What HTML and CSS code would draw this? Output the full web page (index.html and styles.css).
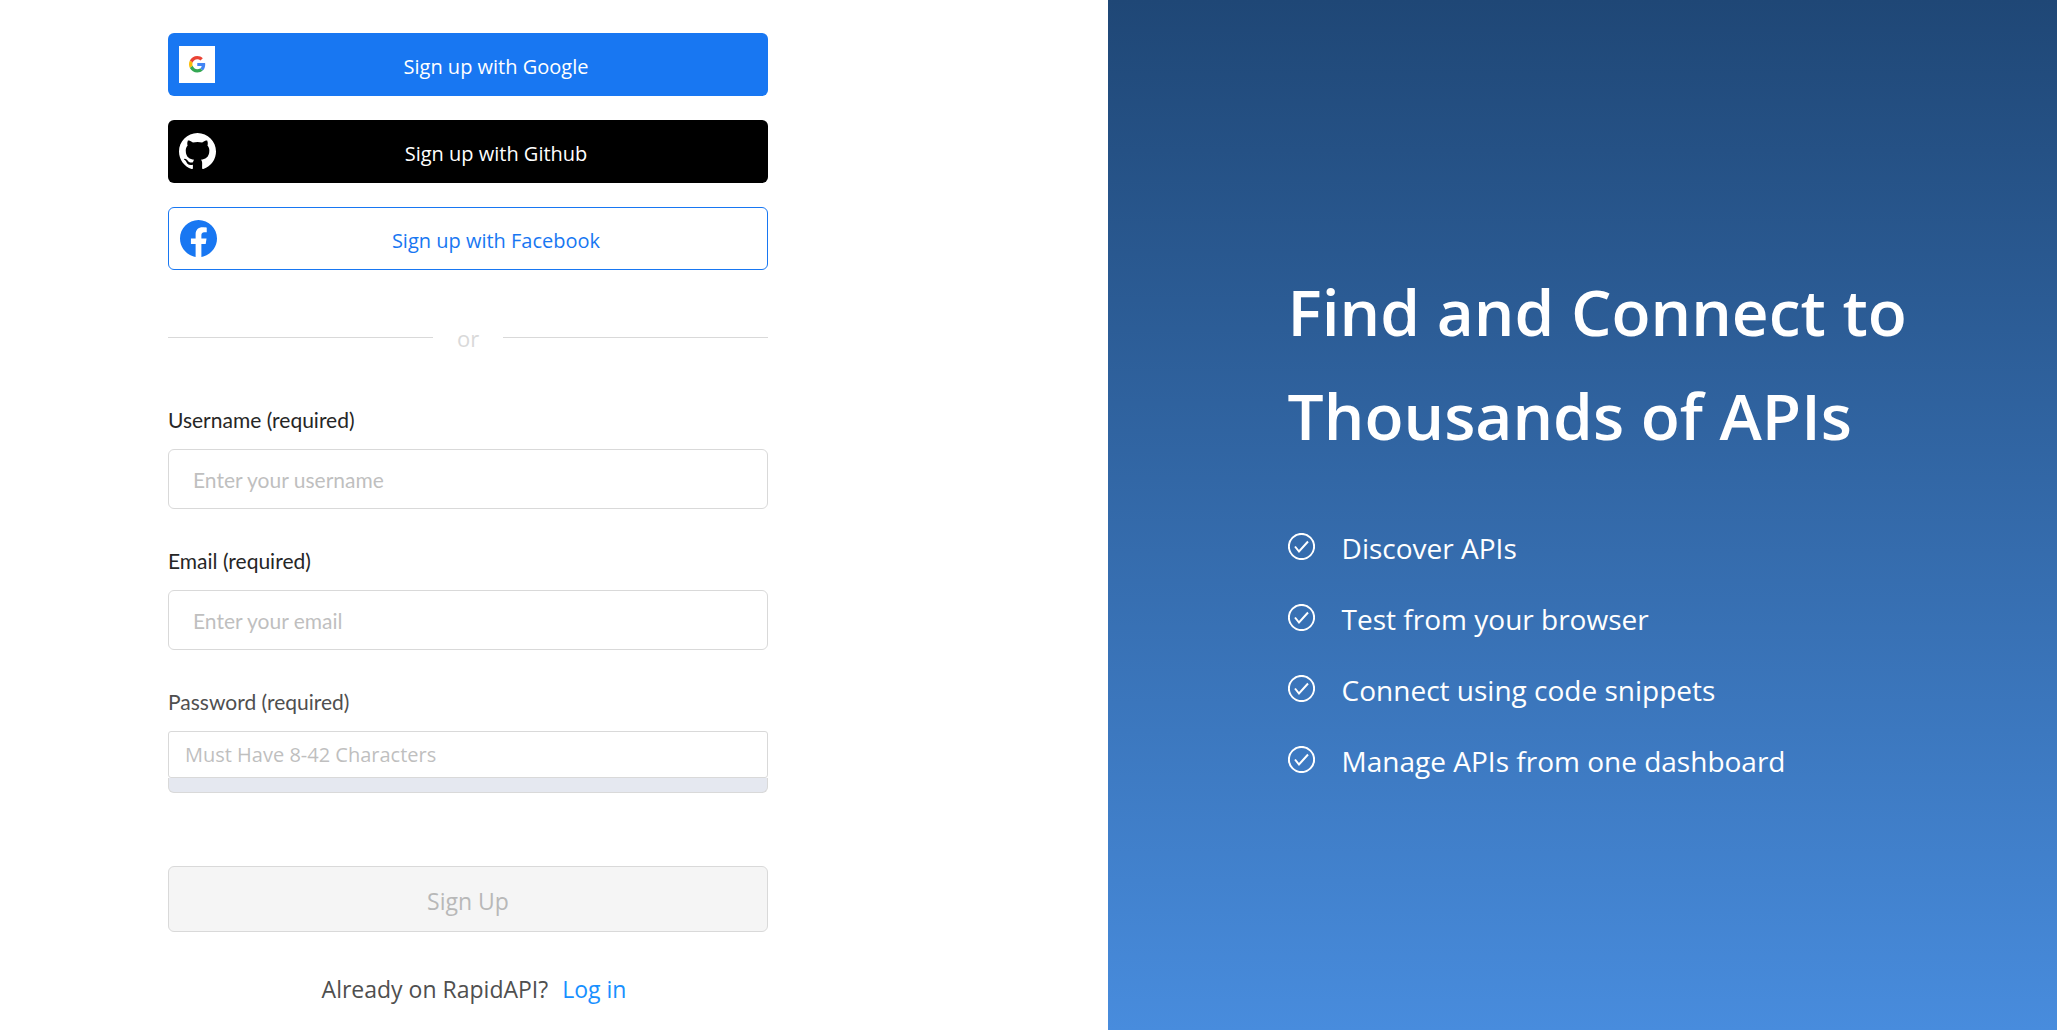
FILE: index.html
```html
<!DOCTYPE html>
<html lang="en">
<head>
<meta charset="utf-8">
<meta name="viewport" content="width=device-width, initial-scale=1">
<title>Sign up - RapidAPI</title>
<link rel="stylesheet" href="styles.css">
</head>
<body>
<div class="page">
  <main class="signup">
    <div class="signup-inner">
      <div class="providers">
        <button type="button" class="provider provider-google">
          <svg class="provider-icon" viewBox="0 0 37 37" aria-hidden="true">
            <rect width="36" height="37" fill="#fff"/>
            <g transform="translate(10 10) scale(.345)">
              <path fill="#EA4335" d="M24 9.500c3.540 0 6.710 1.220 9.210 3.600l6.850-6.850C35.900 2.380 30.470 0 24 0 14.620 0 6.510 5.380 2.560 13.220l7.980 6.190C12.430 13.720 17.740 9.500 24 9.500z"/>
              <path fill="#4285F4" d="M46.980 24.550c0-1.570-.15-3.090-.38-4.550H24v9.020h12.940c-.58 2.960-2.260 5.480-4.780 7.180l7.730 6c4.510-4.180 7.090-10.360 7.090-17.650z"/>
              <path fill="#FBBC05" d="M10.530 28.590c-.48-1.450-.76-2.990-.76-4.590s.27-3.140.76-4.590l-7.980-6.190C.92 16.460 0 20.120 0 24c0 3.880.92 7.540 2.560 10.780l7.970-6.190z"/>
              <path fill="#34A853" d="M24 48c6.480 0 11.930-2.130 15.890-5.810l-7.730-6c-2.150 1.450-4.920 2.300-8.160 2.300-6.260 0-11.570-4.220-13.470-9.910l-7.980 6.190C6.510 42.620 14.620 48 24 48z"/>
            </g>
          </svg>
          <span class="provider-text">Sign up with Google</span>
        </button>
        <button type="button" class="provider provider-github">
          <svg class="provider-icon" viewBox="0 0 16 16" aria-hidden="true">
            <path fill="#fff" d="M8 0C3.580 0 0 3.580 0 8c0 3.540 2.290 6.530 5.470 7.590.4.070.55-.17.55-.38 0-.19-.01-.82-.01-1.490-2.010.37-2.530-.49-2.690-.94-.09-.23-.48-.94-.82-1.130-.28-.15-.68-.52-.01-.53.63-.01 1.080.58 1.230.82.72 1.210 1.870.87 2.330.66.070-.52.28-.87.51-1.070-1.780-.2-3.640-.89-3.640-3.950 0-.87.31-1.590.82-2.150-.08-.2-.36-1.020.08-2.120 0 0 .67-.21 2.200.82.64-.18 1.320-.27 2-.27s1.360.09 2 .27c1.530-1.040 2.200-.82 2.200-.82.44 1.100.16 1.920.08 2.120.51.56.82 1.270.82 2.150 0 3.070-1.870 3.750-3.650 3.950.29.25.54.73.54 1.480 0 1.070-.01 1.930-.01 2.200 0 .21.15.46.55.38A8.010 8.010 0 0 0 16 8c0-4.420-3.580-8-8-8z"/>
          </svg>
          <span class="provider-text">Sign up with Github</span>
        </button>
        <button type="button" class="provider provider-facebook">
          <svg class="provider-icon" viewBox="0 0 24 24" aria-hidden="true">
            <path fill="currentColor" d="M24 12.073c0-6.627-5.373-12-12-12s-12 5.373-12 12c0 5.990 4.388 10.954 10.125 11.854v-8.385H7.078v-3.470h3.047V9.430c0-3.007 1.792-4.669 4.533-4.669 1.312 0 2.686.235 2.686.235v2.953H15.830c-1.491 0-1.956.925-1.956 1.874v2.250h3.328l-.532 3.470h-2.796v8.385C19.612 23.027 24 18.062 24 12.073z"/>
          </svg>
          <span class="provider-text">Sign up with Facebook</span>
        </button>
      </div>

      <div class="divider"><span>or</span></div>

      <form class="form">
        <div class="field">
          <label for="username">Username (required)</label>
          <input class="input" id="username" type="text" placeholder="Enter your username">
        </div>
        <div class="field">
          <label for="email">Email (required)</label>
          <input class="input" id="email" type="email" placeholder="Enter your email">
        </div>
        <div class="field">
          <label class="label-soft" for="password">Password (required)</label>
          <div class="password">
            <input class="password-input" id="password" type="password" placeholder="Must Have 8-42 Characters">
            <div class="strength"></div>
          </div>
        </div>
        <button class="submit" type="submit" disabled>Sign Up</button>
      </form>

      <p class="login">Already on RapidAPI? <a href="#">Log in</a></p>
    </div>
  </main>

  <aside class="promo">
    <h1>Find and Connect to Thousands of APIs</h1>
    <ul class="benefits">
      <li>
        <svg class="check" viewBox="0 0 27 27" aria-hidden="true"><circle cx="13.500" cy="13.500" r="12.600"/><path d="M7 13.500l4 5L20 8.500"/></svg>
        <span>Discover APIs</span>
      </li>
      <li>
        <svg class="check" viewBox="0 0 27 27" aria-hidden="true"><circle cx="13.500" cy="13.500" r="12.600"/><path d="M7 13.500l4 5L20 8.500"/></svg>
        <span>Test from your browser</span>
      </li>
      <li>
        <svg class="check" viewBox="0 0 27 27" aria-hidden="true"><circle cx="13.500" cy="13.500" r="12.600"/><path d="M7 13.500l4 5L20 8.500"/></svg>
        <span>Connect using code snippets</span>
      </li>
      <li>
        <svg class="check" viewBox="0 0 27 27" aria-hidden="true"><circle cx="13.500" cy="13.500" r="12.600"/><path d="M7 13.500l4 5L20 8.500"/></svg>
        <span>Manage APIs from one dashboard</span>
      </li>
    </ul>
  </aside>
</div>
</body>
</html>
```

FILE: styles.css
```css
* {
  box-sizing: border-box;
}

body {
  margin: 0;
  background: #fff;
  color: #4f4f4f;
  font-family: "Segoe UI", "Open Sans", "Noto Sans", sans-serif;
  font-size: 20px;
}

button,
input {
  font: inherit;
}

.page {
  display: grid;
  grid-template-columns: 7fr 6fr;
  min-height: 100vh;
}

.signup {
  padding: 33px 24px 24px 168px;
}

.signup-inner {
  max-width: 600px;
}

.providers {
  display: grid;
  gap: 24px;
}

.provider {
  display: flex;
  align-items: center;
  gap: 8px;
  height: 63px;
  padding: 0 0 0 11px;
  border: 0;
  border-radius: 6px;
  color: #fff;
  cursor: pointer;
}

.provider-icon {
  width: 37px;
  height: 37px;
}

.provider-text {
  flex: 1;
  padding-top: 4px;
  text-align: center;
}

.provider-google {
  background: #1877f2;
}

.provider-github {
  background: #000;
}

.provider-facebook {
  border: 1px solid #1877f2;
  background: #fff;
  color: #1877f2;
}

.divider {
  display: flex;
  align-items: center;
  gap: 24px;
  margin: 48px 0 50px;
  color: #d9d9d9;
  font-size: 22px;
  line-height: 36px;
}

.divider span {
  padding-top: 2px;
}

.divider::before,
.divider::after {
  flex: 1;
  height: 1px;
  background: #d9d9d9;
  content: "";
}

.field {
  margin-bottom: 38px;
}

.field label {
  display: block;
  margin-bottom: 15px;
  color: #262626;
  font-family: Lato, sans-serif;
  font-size: 21px;
  line-height: 28px;
}

.field .label-soft {
  color: #4f4f4f;
}

.input,
.password-input {
  display: block;
  width: 100%;
  border: 1px solid #d9d9d9;
  background: #fff;
  color: #262626;
}

.input {
  height: 60px;
  padding: 0 24px;
  border-radius: 6px;
  font-family: Lato, sans-serif;
  font-size: 21px;
}

.password-input {
  height: 47px;
  padding: 0 16px;
  border-radius: 3px;
}

.input::placeholder,
.password-input::placeholder {
  color: #bfbfbf;
}

.strength {
  height: 15px;
  border: 1px solid #d9d9d9;
  border-top: 0;
  border-radius: 0 0 6px 6px;
  background: #e5e8f0;
}

.submit {
  display: block;
  width: 100%;
  height: 66px;
  margin-top: 73px;
  padding: 4px 0 0;
  border: 1px solid #d9d9d9;
  border-radius: 6px;
  background: #f5f5f5;
  color: #b8b8b8;
  font-size: 23px;
}

.login {
  display: flex;
  justify-content: center;
  gap: 14px;
  margin: 39px 0 0 12px;
  font-size: 23px;
  line-height: 36px;
}

.login a {
  color: #1890ff;
  text-decoration: none;
}

.promo {
  padding: 260px 120px 120px 180px;
  background: linear-gradient(#1f4776, #488cdd);
  color: #fff;
}

.promo h1 {
  max-width: 660px;
  margin: 0;
  font-size: 64px;
  font-weight: 600;
  line-height: 104px;
}

.benefits {
  display: grid;
  gap: 27px;
  margin: 58px 0 0;
  padding: 0;
  font-size: 28px;
  line-height: 44px;
  list-style: none;
}

.benefits li {
  display: flex;
  align-items: center;
  gap: 27px;
}

.check {
  flex: none;
  width: 27px;
  height: 27px;
  margin-bottom: 4px;
  fill: none;
  stroke: #fff;
  stroke-width: 2;
}
```
